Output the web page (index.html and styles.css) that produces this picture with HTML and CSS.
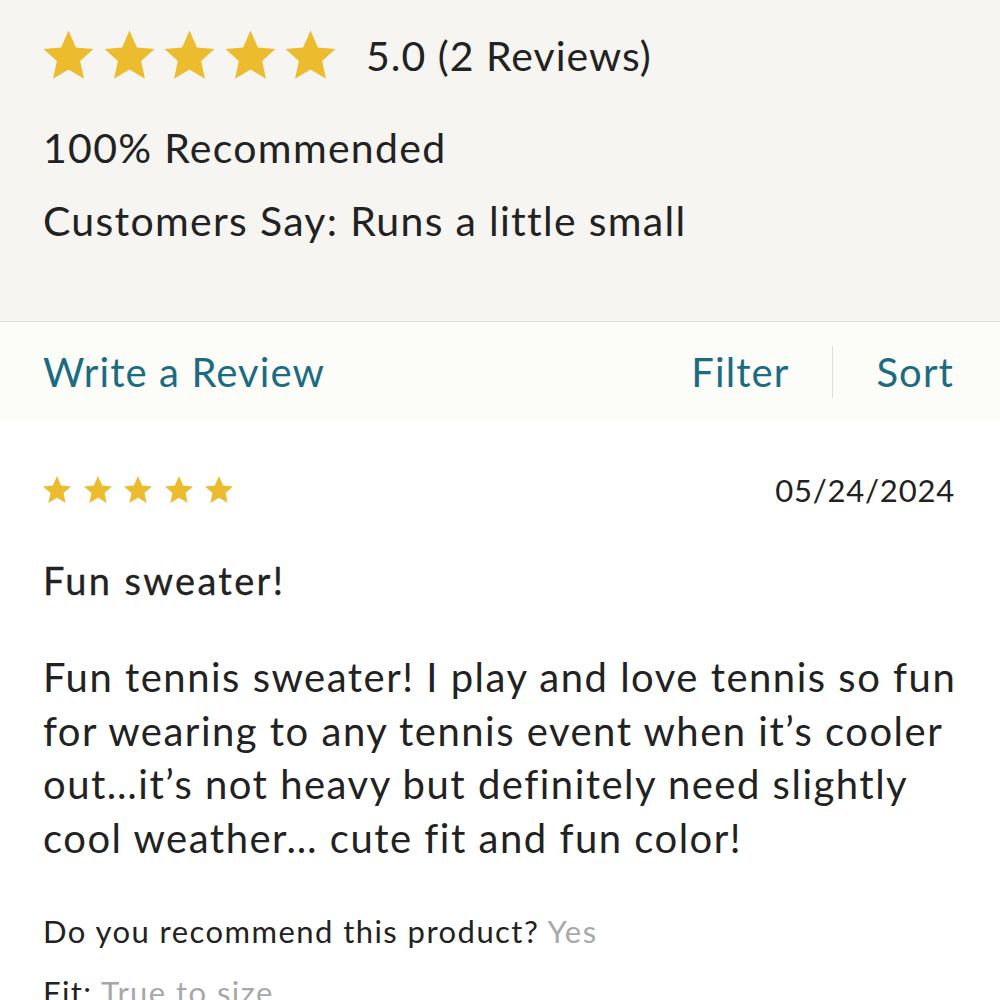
FILE: index.html
```html
<!DOCTYPE html>
<html lang="en">
<head>
    <meta charset="UTF-8">
    <meta name="viewport" content="width=device-width, initial-scale=1.0">
    <title>Reviews</title>
    <link rel="stylesheet" href="styles.css">
</head>
<body>
    <div class="summary">
        <div class="rating-row">
            <div class="stars stars-big">
                <svg viewBox="0 0 24 24"><polygon points="12,1.5 15.1,8.6 22.5,9.3 16.9,14.3 18.5,21.8 12,17.9 5.5,21.8 7.1,14.3 1.5,9.3 8.9,8.6"/></svg>
                <svg viewBox="0 0 24 24"><polygon points="12,1.5 15.1,8.6 22.5,9.3 16.9,14.3 18.5,21.8 12,17.9 5.5,21.8 7.1,14.3 1.5,9.3 8.9,8.6"/></svg>
                <svg viewBox="0 0 24 24"><polygon points="12,1.5 15.1,8.6 22.5,9.3 16.9,14.3 18.5,21.8 12,17.9 5.5,21.8 7.1,14.3 1.5,9.3 8.9,8.6"/></svg>
                <svg viewBox="0 0 24 24"><polygon points="12,1.5 15.1,8.6 22.5,9.3 16.9,14.3 18.5,21.8 12,17.9 5.5,21.8 7.1,14.3 1.5,9.3 8.9,8.6"/></svg>
                <svg viewBox="0 0 24 24"><polygon points="12,1.5 15.1,8.6 22.5,9.3 16.9,14.3 18.5,21.8 12,17.9 5.5,21.8 7.1,14.3 1.5,9.3 8.9,8.6"/></svg>
            </div>
            <span class="score">5.0 (2 Reviews)</span>
        </div>
        <p class="summary-line">100% Recommended</p>
        <p class="summary-line">Customers Say: Runs a little small</p>
    </div>

    <div class="actions">
        <a class="action-link" href="#">Write a Review</a>
        <div class="action-right">
            <a class="action-link" href="#">Filter</a>
            <span class="divider"></span>
            <a class="action-link" href="#">Sort</a>
        </div>
    </div>

    <div class="review">
        <div class="review-head">
            <div class="stars stars-small">
                <svg viewBox="0 0 24 24"><polygon points="12,1.5 15.1,8.6 22.5,9.3 16.9,14.3 18.5,21.8 12,17.9 5.5,21.8 7.1,14.3 1.5,9.3 8.9,8.6"/></svg>
                <svg viewBox="0 0 24 24"><polygon points="12,1.5 15.1,8.6 22.5,9.3 16.9,14.3 18.5,21.8 12,17.9 5.5,21.8 7.1,14.3 1.5,9.3 8.9,8.6"/></svg>
                <svg viewBox="0 0 24 24"><polygon points="12,1.5 15.1,8.6 22.5,9.3 16.9,14.3 18.5,21.8 12,17.9 5.5,21.8 7.1,14.3 1.5,9.3 8.9,8.6"/></svg>
                <svg viewBox="0 0 24 24"><polygon points="12,1.5 15.1,8.6 22.5,9.3 16.9,14.3 18.5,21.8 12,17.9 5.5,21.8 7.1,14.3 1.5,9.3 8.9,8.6"/></svg>
                <svg viewBox="0 0 24 24"><polygon points="12,1.5 15.1,8.6 22.5,9.3 16.9,14.3 18.5,21.8 12,17.9 5.5,21.8 7.1,14.3 1.5,9.3 8.9,8.6"/></svg>
            </div>
            <span class="date">05/24/2024</span>
        </div>
        <h2 class="review-title">Fun sweater!</h2>
        <p class="review-body">Fun tennis sweater! I play and love tennis so fun<br>
            for wearing to any tennis event when it’s cooler<br>
            out…it’s not heavy but definitely need slightly<br>
            cool weather… cute fit and fun color!</p>
        <p class="meta">Do you recommend this product? <span class="meta-value">Yes</span></p>
        <p class="meta">Fit: <span class="meta-value">True to size</span></p>
    </div>
</body>
</html>
```

FILE: styles.css
```css
body {
    margin: 0;
    background-color: #fff;
    font-family: 'Lato', 'Noto Sans', Arial, sans-serif;
    color: #222;
}

.summary {
    background-color: #f6f5f2;
    padding: 27px 43px 0;
    border-bottom: 1px solid #dcdcdc;
    height: 294px;
}

.rating-row {
    display: flex;
    align-items: center;
    gap: 30px;
}

.stars {
    display: flex;
}

.stars svg {
    fill: #ecbc2e;
    display: block;
}

.stars-big {
    gap: 3.5px;
    margin-left: -3px;
}

.stars-big svg {
    width: 57px;
    height: 57px;
}

.score {
    font-size: 41px;
    letter-spacing: 1px;
    margin-left: -3px;
}

.summary-line {
    margin: 0;
    font-size: 41px;
    letter-spacing: 1.3px;
    line-height: 73px;
}

.summary-line:first-of-type {
    margin-top: 27px;
}

.actions {
    display: flex;
    justify-content: space-between;
    align-items: center;
    height: 100px;
    padding: 0 46px 0 43px;
    background-color: #fcfcf8;
}

.action-right {
    display: flex;
    align-items: center;
}

.action-link {
    color: #1b6b82;
    text-decoration: none;
    font-size: 40px;
    letter-spacing: 1.1px;
}

.divider {
    width: 1px;
    height: 52px;
    background-color: #dedede;
    margin: 0 43px;
}

.review {
    padding: 0 43px;
}

.review-head {
    display: flex;
    justify-content: space-between;
    align-items: center;
    height: 40px;
    margin-top: 48px;
}

.stars-small {
    gap: 8.5px;
    margin-left: -2px;
}

.stars-small svg {
    width: 32px;
    height: 32px;
}

.date {
    font-size: 31px;
    letter-spacing: 0.8px;
    margin-right: 2px;
}

.review-title {
    margin: 45px 0 0;
    font-size: 38px;
    font-weight: 400;
    letter-spacing: 2.3px;
    line-height: 50px;
    -webkit-text-stroke: 0.3px #222;
}

.review-body {
    margin: 46px 0 0;
    font-size: 40px;
    letter-spacing: 1.5px;
    line-height: 53.5px;
}

.meta {
    margin: 46px 0 0;
    font-size: 31px;
    letter-spacing: 1.45px;
    line-height: 40px;
}

.meta + .meta {
    margin-top: 21px;
}

.meta-value {
    color: #a8a8a8;
}
```
